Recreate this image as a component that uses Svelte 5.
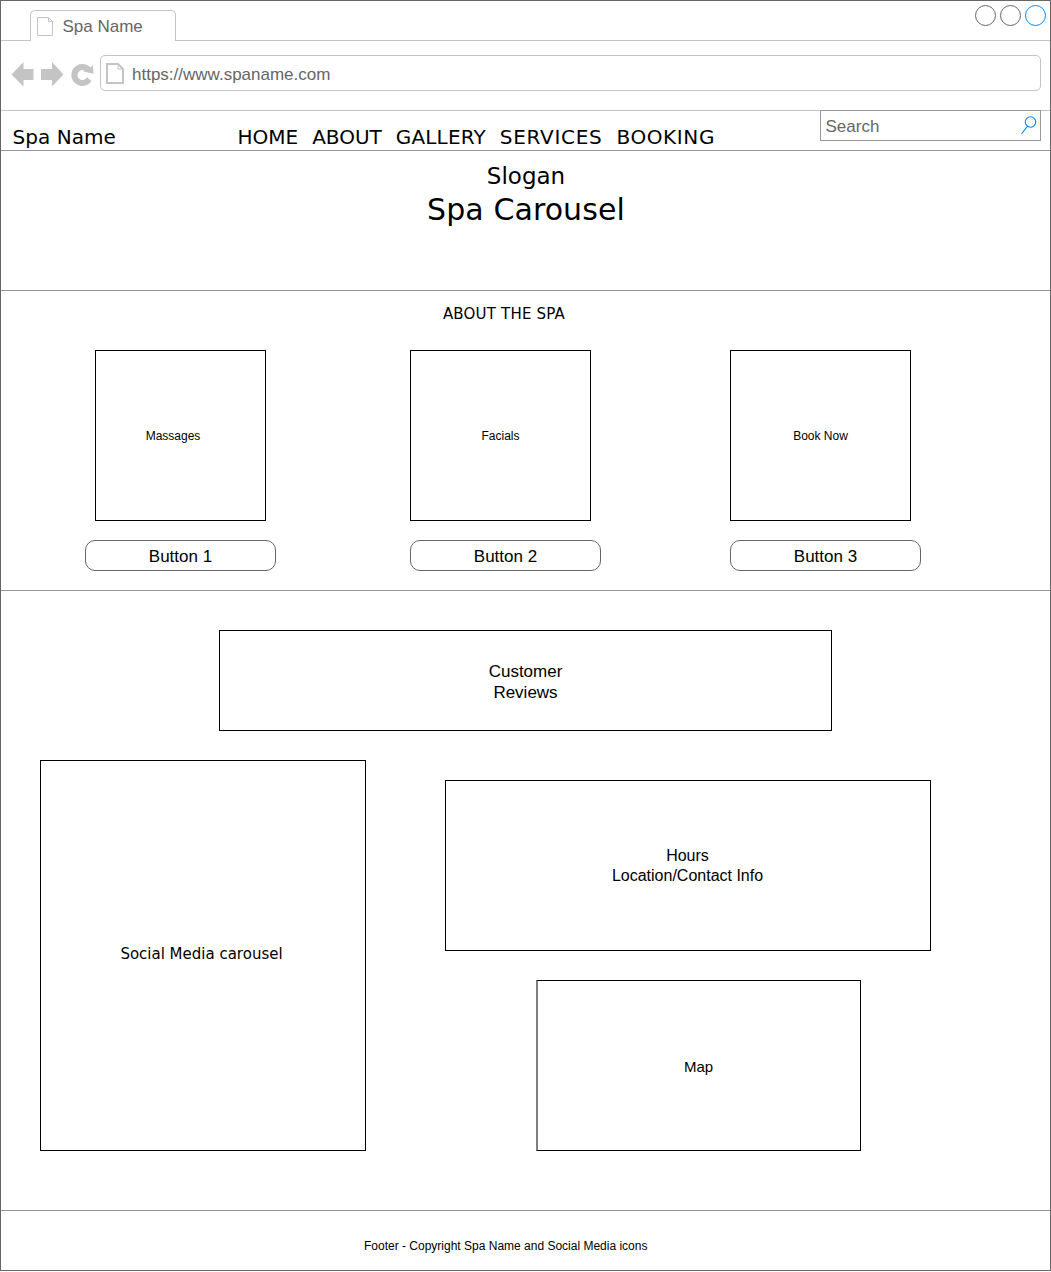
<script>
  const links = ['HOME', 'ABOUT', 'GALLERY', 'SERVICES', 'BOOKING'];
  const services = [
    { title: 'Massages', button: 'Button 1', kind: 'first' },
    { title: 'Facials', button: 'Button 2', kind: 'second' },
    { title: 'Book Now', button: 'Button 3', kind: 'third' }
  ];
</script>

<div class="window">
  <div class="tabs">
    <div class="tab">
      <svg class="doc" width="17" height="20" viewBox="0 0 17 20"><path d="M.5.5H11.5L15.5 4.5V18.5H.5ZM11.5.5V4.5H15.5" /></svg>
      <span>Spa Name</span>
    </div>
    <div class="controls"><i></i><i></i><i class="blue"></i></div>
  </div>

  <div class="toolbar">
    <svg class="nav-icons" width="84" height="26" viewBox="0 0 84 26">
      <path d="M.5 12.500 12.500 0V7H22.500V18H12.500V24.500Z" />
      <path d="M52.500 12.500 41 0V7H30V18H41V24.500Z" />
      <path d="M81.700 2.800 82.600 11.700 71.500 9.300 74 8.700A5 5 0 1 0 76 15.200L80.500 19A11 11 0 1 1 79.500 5.500Z" />
    </svg>
    <div class="address">
      <svg class="doc thick" width="18" height="21" viewBox="0 0 18 21"><path d="M1 1H12L17 6V20H1Z" /><path class="fold" d="M12 1V6H17" /></svg>
      <span>https://www.spaname.com</span>
    </div>
  </div>

  <header>
    <div class="brand">Spa Name</div>
    <nav>
      {#each links as link}<a class={link.toLowerCase()} href="#{link.toLowerCase()}">{link}</a>{/each}
    </nav>
    <div class="search">
      <span>Search</span>
      <svg width="17" height="19" viewBox="0 0 17 19"><circle cx="10.500" cy="6" r="5.200" /><path d="M7.500 10.200 1.500 18" /></svg>
    </div>
  </header>

  <section class="hero">
    <p>Slogan</p>
    <h1>Spa Carousel</h1>
  </section>

  <section class="about-spa">
    <h2>ABOUT THE SPA</h2>
    <div class="services-row">
      {#each services as s}
        <div class="service {s.kind}">
          <div class="card"><span>{s.title}</span></div>
          <button>{s.button}</button>
        </div>
      {/each}
    </div>
  </section>

  <main>
    <div class="reviews">Customer<br />Reviews</div>
    <div class="columns">
      <div class="social"><span>Social Media carousel</span></div>
      <div class="info">
        <div class="hours">Hours<br />Location/Contact Info</div>
        <div class="map">Map</div>
      </div>
    </div>
  </main>

  <footer>Footer - Copyright Spa Name and Social Media icons</footer>
</div>

<style>
  :global(body) { margin: 0; background: #fff; }
  .window, .window * { box-sizing: border-box; }
  .window {
    width: 1051px;
    height: 1271px;
    border: 1px solid #666;
    background: #fff;
    color: #000;
    font-family: 'Liberation Sans', Arial, sans-serif;
    font-size: 17px;
    line-height: 1.2;
  }
  .tabs {
    display: flex;
    justify-content: space-between;
    height: 40px;
    padding: 9px 4px 0 29px;
    border-bottom: 1px solid #c4c4c4;
  }
  .tab {
    display: flex;
    align-items: center;
    width: 146px;
    height: 31px;
    padding-left: 6px;
    border: 1px solid #c4c4c4;
    border-bottom: 0;
    border-radius: 5px 5px 0 0;
    background: #fff;
    color: #666;
  }
  .tab svg { margin-top: 2px; }
  .tab span { margin: 2px 0 0 8.500px; }
  .doc { fill: none; stroke: #c4c4c4; stroke-width: 1; }
  .thick { stroke-width: 2; }
  .thick .fold { stroke-width: 1; }
  .controls { display: flex; gap: 4px; margin-top: -5px; }
  .controls i { width: 21px; height: 21px; border: 1px solid #666; border-radius: 50%; }
  .controls .blue { border-color: #008cff; }
  .toolbar {
    display: flex;
    height: 70px;
    padding: 14px 9px 0 10px;
    border-bottom: 1px solid #c4c4c4;
  }
  .nav-icons { margin-top: 7px; fill: #c4c4c4; }
  .address {
    display: flex;
    align-items: center;
    width: 941px;
    height: 36px;
    margin-left: 5px;
    padding-left: 5px;
    border: 1px solid #c4c4c4;
    border-radius: 5px;
    color: #666;
  }
  .address span { margin: 4px 0 0 8px; }
  header {
    display: flex;
    height: 40px;
    border-bottom: 1px solid #999;
    font-family: 'DejaVu Sans', Verdana, sans-serif;
    font-size: 20px;
  }
  .brand { width: 224px; padding: 14px 0 0 11.500px; letter-spacing: .06px; }
  nav { display: flex; width: 594px; padding: 14px 0 0 12.500px; }
  nav a { margin-right: 14px; color: #000; text-decoration: none; }
  .gallery { letter-spacing: .15px; }
  .services { letter-spacing: .7px; }
  .booking { letter-spacing: .6px; }
  .search {
    display: flex;
    justify-content: space-between;
    align-items: center;
    width: 221px;
    height: 31px;
    margin: -1px 0 0 1px;
    padding: 0 3px 0 4.500px;
    border: 1px solid #999;
    font: 17px/20px 'Liberation Sans', Arial, sans-serif;
    color: #666;
  }
  .search span { margin-top: 2px; }
  .search svg { fill: none; stroke: #008cff; stroke-width: 1.100; }
  .hero {
    height: 140px;
    padding: 11px 0 0 1px;
    border-bottom: 1px solid #999;
    text-align: center;
    font-family: 'DejaVu Sans', Verdana, sans-serif;
  }
  .hero p { margin: 0; font-size: 23px; line-height: 28px; }
  .hero h1 { margin: 2px 0 0; font-size: 30px; font-weight: 400; line-height: 36px; letter-spacing: .08px; }
  .about-spa { height: 300px; padding-top: 14px; border-bottom: 1px solid #999; }
  h2 {
    width: 1006px;
    margin: 0;
    text-align: center;
    font: 400 15px/18px 'DejaVu Sans', Verdana, sans-serif;
    letter-spacing: .2px;
  }
  .services-row { display: flex; padding: 27px 0 0 84px; }
  .service { width: 191px; }
  .second { margin-left: 134px; }
  .third { margin-left: 129px; }
  .card {
    display: flex;
    align-items: center;
    justify-content: center;
    width: 181px;
    height: 171px;
    padding-top: 2px;
    border: 1px solid #000;
    font-size: 12px;
  }
  .first .card { width: 171px; margin-left: 10px; padding-right: 15px; }
  button {
    display: block;
    width: 191px;
    height: 31px;
    margin: 19px 0 0;
    padding: 2px 0 0;
    border: 1px solid #666;
    border-radius: 10px;
    background: #fff;
    color: #000;
    font: 17px/20px 'Liberation Sans', Arial, sans-serif;
  }
  main { height: 620px; padding-top: 39px; border-bottom: 1px solid #999; }
  .reviews {
    display: grid;
    place-content: center;
    width: 613px;
    height: 101px;
    margin-left: 218px;
    border: 1px solid #000;
    text-align: center;
    line-height: 21px;
    padding-top: 2px;
  }
  .columns { display: flex; padding: 29px 0 0 39px; }
  .social, .hours, .map { display: grid; place-content: center; border: 1px solid #000; text-align: center; }
  .social {
    width: 326px;
    height: 391px;
    padding: 0 3px 4px 0;
    font: 15px/18px 'DejaVu Sans', Verdana, sans-serif;
  }
  .info { margin: 20px 0 0 79px; }
  .hours { width: 486px; height: 171px; padding-right: 1px; font-size: 16px; line-height: 20px; }
  .map {
    width: 325px;
    height: 171px;
    margin: 29px 0 0 91px;
    padding: 2px 1px 0 0;
    border-left: 2px solid #808080;
    font-size: 15px;
  }
  footer { height: 59px; padding: 28px 0 0 363px; font-size: 12px; line-height: 14px; }
</style>
